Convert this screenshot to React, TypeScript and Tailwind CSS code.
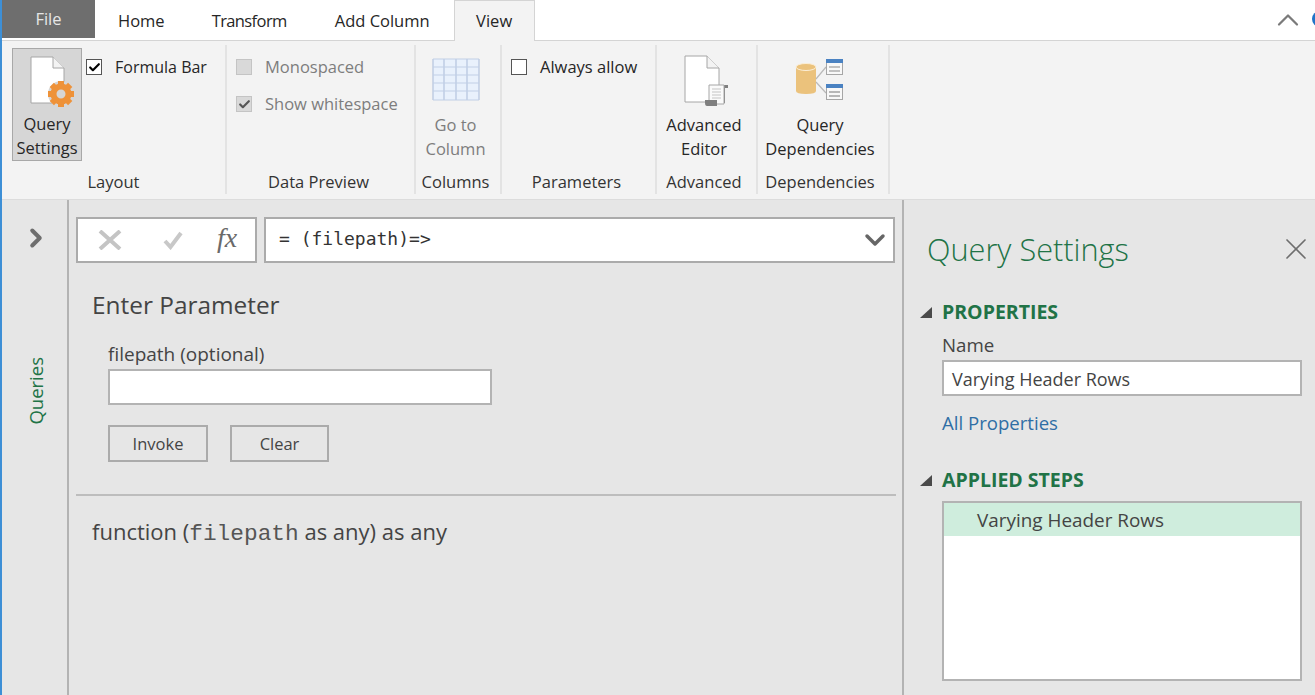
import { ReactNode } from 'react';
import { Check, ChevronDown, ChevronRight, ChevronUp, X } from 'lucide-react';

function Tab({ label, className }: { label: string; className: string }) {
  return <div className={`flex items-center pt-[2px] text-[#262626] ${className}`}>{label}</div>;
}

function RibbonGroup({ label, width, children, labelPad }: { label: string; width: string; children: ReactNode; labelPad?: string }) {
  return (
    <div className={`flex flex-col h-[149px] border-r-2 border-[#e3e3e3] shrink-0 ${width}`}>
      <div className="h-[124px] flex items-start">{children}</div>
      <div className={`text-center text-[16.5px] leading-[24px] mt-[3px] text-[#333] ${labelPad ?? 'pr-[4px]'}`}>{label}</div>
    </div>
  );
}

function CheckRow({
  label,
  checked,
  disabled,
  className,
  labelClass,
}: {
  label: string;
  checked?: boolean;
  disabled?: boolean;
  className?: string;
  labelClass?: string;
}) {
  return (
    <div className={`flex items-center h-[24px] ${className ?? ''}`}>
      <div
        className={`w-[16px] h-[16px] border flex items-center justify-center shrink-0 ${
          disabled ? 'bg-[#d9d9d9] border-[#c4c4c4]' : 'bg-white border-[#555]'
        }`}
      >
        {checked && <Check size={13} strokeWidth={4} className={disabled ? 'text-[#555]' : 'text-black'} />}
      </div>
      <span className={`ml-[13px] whitespace-nowrap ${labelClass ?? 'text-[16.5px]'} ${disabled ? 'text-[#7d7d7d]' : 'text-[#262626]'}`}>{label}</span>
    </div>
  );
}

function BigLabel({ lines, muted }: { lines: string[]; muted?: boolean }) {
  return (
    <div className={`text-center text-[16.5px] leading-[24px] whitespace-nowrap ${muted ? 'text-[#7d7d7d]' : 'text-[#262626]'}`}>
      {lines.map((l) => (
        <div key={l}>{l}</div>
      ))}
    </div>
  );
}

function QuerySettingsIcon() {
  const teeth = [0, 45, 90, 135, 180, 225, 270, 315];
  return (
    <svg width="46" height="54" viewBox="0 0 46 54">
      <path d="M1 1H23L34 12V47H1Z" fill="#fff" stroke="#a6a6a6" />
      <path d="M23 1V12H34" fill="#f3f3f3" stroke="#a6a6a6" />
      <circle cx="31" cy="38" r="13" fill="#d6d6d6" />
      {teeth.map((t) => (
        <rect key={t} x="28" y="25" width="6" height="6" fill="#ee9239" transform={`rotate(${t} 31 38)`} />
      ))}
      <circle cx="31" cy="38" r="7.5" fill="none" stroke="#ee9239" strokeWidth="6" />
    </svg>
  );
}

function GridIcon() {
  const xs = [1, 12, 24, 35, 47];
  const ys = [1, 9, 17, 25, 33, 42];
  return (
    <svg width="48" height="43" viewBox="0 0 48 43">
      <rect x="1" y="1" width="46" height="41" fill="#e9f1fc" />
      {xs.map((x) => (
        <line key={x} x1={x} y1="1" x2={x} y2="42" stroke="#b4c4de" strokeWidth="1.2" />
      ))}
      {ys.map((y) => (
        <line key={y} x1="1" y1={y} x2="47" y2={y} stroke="#c1cfe5" strokeWidth="1.2" />
      ))}
    </svg>
  );
}

function EditorIcon() {
  return (
    <svg width="46" height="52" viewBox="0 0 46 52">
      <path d="M1 1H23L35 13V47H1Z" fill="#fff" stroke="#a6a6a6" />
      <path d="M23 1V13H35" fill="#f3f3f3" stroke="#a6a6a6" />
      <path d="M28 30H44V33H41V48H28Z" fill="#7f7f7f" />
      <path d="M25 30H40V49H25Z" fill="#fafafa" stroke="#a6a6a6" />
      <path d="M28 34H37M28 37H37M28 40H37M28 43H37" stroke="#c4c4c4" />
      <path d="M21 45H33V51H23Q21 51 21 48Z" fill="#7f7f7f" />
    </svg>
  );
}

function DependenciesIcon() {
  return (
    <svg width="50" height="46" viewBox="0 0 50 46">
      <path d="M1 9V33Q1 36 11 36Q21 36 21 33V9Z" fill="#ebc27c" />
      <ellipse cx="11" cy="9" rx="10" ry="3.5" fill="#ebc27c" stroke="#fbeed7" />
      <path d="M21 21L31 9M21 24L31 35" stroke="#b9b9b9" strokeWidth="1.2" fill="none" />
      <rect x="31.5" y="1.5" width="16" height="15" fill="#f8f8f8" stroke="#a6a6a6" />
      <rect x="31" y="1" width="17" height="4" fill="#4a82c2" />
      <path d="M34 9H45M34 13H45" stroke="#8a8a8a" />
      <rect x="31.5" y="26.5" width="16" height="15" fill="#f8f8f8" stroke="#a6a6a6" />
      <rect x="31" y="26" width="17" height="4" fill="#4a82c2" />
      <path d="M34 34H45M34 38H45" stroke="#777" />
    </svg>
  );
}

function SectionHeading({ label }: { label: string }) {
  return (
    <div className="flex items-center h-[24px]">
      <svg width="12" height="11" viewBox="0 0 12 11" className="shrink-0">
        <path d="M12 0V11H0Z" fill="#4a4a4a" />
      </svg>
      <span className="ml-[10px] text-[19.5px] font-bold text-[#217346]">{label}</span>
    </div>
  );
}

export default function App() {
  return (
    <div className="w-[1315px] h-[695px] overflow-hidden flex flex-col border-l-2 border-[#3d8fd6] bg-[#e6e6e6] font-['Open_Sans','Noto_Sans',sans-serif] text-[16.5px]">
      {/* tabs */}
      <div className="h-[41px] bg-white flex shrink-0 border-b border-[#d4d4d4]">
        <div className="w-[93px] h-[38px] bg-[#6e6e6e] text-[#e6e6e6] flex items-center justify-center">File</div>
        <Tab label="Home" className="ml-[23px]" />
        <Tab label="Transform" className="ml-[47px] tracking-[-0.6px]" />
        <Tab label="Add Column" className="ml-[48px]" />
        <div className="ml-[24px] w-[81px] h-[41px] bg-[#f3f3f3] border border-b-0 border-[#d4d4d4] flex items-center justify-center text-[#262626]">
          View
        </div>
        <div className="ml-auto flex items-center">
          <ChevronUp size={36} strokeWidth={1.5} className="text-[#7a7a7a]" />
          <div className="ml-[6px] w-[16px] h-[16px] rounded-full bg-[#1f74c8] -mr-[13px] mb-[2px]" />
        </div>
      </div>

      {/* ribbon */}
      <div className="h-[159px] bg-[#f3f3f3] flex shrink-0 pt-[4px] border-b border-[#dcdcdc]">
        <RibbonGroup label="Layout" width="w-[225px]" labelPad="pr-[0px]">
          <div className="ml-[10px] mt-[3px] w-[70px] h-[113px] bg-[#d6d6d6] border border-[#a8a8a8] flex flex-col items-center pt-[7px]">
            <div className="h-[60px] ml-[11px]">
              <QuerySettingsIcon />
            </div>
            <BigLabel lines={['Query', 'Settings']} />
          </div>
          <CheckRow label="Formula Bar" checked className="ml-[4px] mt-[10px]" labelClass="text-[16px]" />
        </RibbonGroup>
        <RibbonGroup label="Data Preview" width="w-[189px]">
          <div className="ml-[9px] mt-[10px] flex flex-col gap-[13px]">
            <CheckRow label="Monospaced" disabled />
            <CheckRow label="Show whitespace" checked disabled />
          </div>
        </RibbonGroup>
        <RibbonGroup label="Columns" width="w-[86px]" labelPad="pr-[5px]">
          <div className="w-full flex flex-col items-center mt-[13px] pr-[5px]">
            <div className="h-[55px]">
              <GridIcon />
            </div>
            <BigLabel lines={['Go to', 'Column']} muted />
          </div>
        </RibbonGroup>
        <RibbonGroup label="Parameters" width="w-[155px]" labelPad="pr-[4px]">
          <CheckRow label="Always allow" className="ml-[9px] mt-[10px]" />
        </RibbonGroup>
        <RibbonGroup label="Advanced" width="w-[101px]" labelPad="pr-[5px]">
          <div className="w-full flex flex-col items-center mt-[10px] pr-[5px]">
            <div className="h-[58px] ml-[6px]">
              <EditorIcon />
            </div>
            <BigLabel lines={['Advanced', 'Editor']} />
          </div>
        </RibbonGroup>
        <RibbonGroup label="Dependencies" width="w-[132px]" labelPad="pr-[6px]">
          <div className="w-full flex flex-col items-center mt-[13px] pr-[6px]">
            <div className="h-[55px]">
              <DependenciesIcon />
            </div>
            <BigLabel lines={['Query', 'Dependencies']} />
          </div>
        </RibbonGroup>
      </div>

      {/* body */}
      <div className="flex flex-1 min-h-0">
        <div className="w-[67px] shrink-0 border-r-2 border-[#b3b3b3] flex flex-col items-center pl-[3px] pt-[23px]">
          <ChevronRight size={30} strokeWidth={3.2} className="text-[#6e6e6e]" />
          <div className="mt-[104px] [writing-mode:vertical-rl] rotate-180 text-[#217346] text-[18.5px] leading-none">Queries</div>
        </div>

        <div className="w-[835px] shrink-0 border-r-2 border-[#b3b3b3] flex flex-col pt-[17px]">
          <div className="flex px-[7px] gap-[7px] h-[46px]">
            <div className="w-[181px] bg-white border-2 border-[#ababab] flex items-center shrink-0">
              <svg width="24" height="20" viewBox="0 0 24 20" className="ml-[20px] shrink-0">
                <path d="M2 1L22 19M22 1L2 19" stroke="#c4c4c4" strokeWidth="4" fill="none" />
              </svg>
              <svg width="20" height="19" viewBox="0 0 20 19" className="ml-[41px] shrink-0">
                <path d="M2 10L7.5 16L18 2" stroke="#c8c8c8" strokeWidth="4" fill="none" />
              </svg>
              <span className="ml-[34px] font-['Liberation_Serif',serif] italic text-[28px] leading-none mb-[4px] text-[#6a6a6a]">fx</span>
            </div>
            <div className="flex-1 bg-white border-2 border-[#ababab] flex items-center justify-between pl-[13px] pr-[2px]">
              <span className="font-['DejaVu_Sans_Mono',monospace] text-[18px] mb-[3px] text-[#333]">= (filepath)=&gt;</span>
              <ChevronDown size={32} strokeWidth={2.6} className="text-[#666]" />
            </div>
          </div>

          <div className="pl-[23px] mt-[24px] text-[24.4px] leading-[36px] text-[#444]">Enter Parameter</div>
          <div className="pl-[39px] mt-[18px] text-[19px] leading-[26px] text-[#444]">filepath (optional)</div>
          <div className="ml-[39px] mt-[2px] w-[384px] h-[36px] bg-white border-2 border-[#b3b3b3]" />
          <div className="ml-[39px] mt-[20px] flex gap-[22px]">
            <div className="w-[100px] h-[37px] pt-[2px] border-2 border-[#ababab] flex items-center justify-center text-[#444] text-[16.5px]">Invoke</div>
            <div className="w-[99px] h-[37px] pt-[2px] border-2 border-[#ababab] flex items-center justify-center text-[#444] text-[16.5px]">Clear</div>
          </div>
          <div className="ml-[7px] mt-[32px] w-[820px] border-t-2 border-[#bdbdbd]" />
          <div className="pl-[23px] mt-[18px] text-[22px] leading-[34px] text-[#444]">
            function (<span className="font-['Liberation_Mono',monospace] text-[22.8px] text-[#555]">filepath</span> as any) as any
          </div>
        </div>

        <div className="flex-1 pt-[27px] pl-[16px] pr-[13px] min-w-0">
          <div className="flex items-center justify-between h-[44px]">
            <span className="ml-[7px] text-[30.7px] font-light text-[#217346]">Query Settings</span>
            <X size={36} strokeWidth={1.1} className="text-[#6e6e6e] -mr-[12px]" />
          </div>
          <div className="mt-[29px]">
            <SectionHeading label="PROPERTIES" />
          </div>
          <div className="ml-[22px]">
            <div className="mt-[9px] leading-[24px] text-[18.7px] text-[#444]">Name</div>
            <div className="mt-[3px] h-[36px] pt-[2px] bg-white border-2 border-[#b3b3b3] flex items-center pl-[8px] text-[18px] text-[#444]">
              Varying Header Rows
            </div>
            <div className="mt-[14px] leading-[26px] text-[18.6px] text-[#2f6ea5]">All Properties</div>
          </div>
          <div className="mt-[32px]">
            <SectionHeading label="APPLIED STEPS" />
          </div>
          <div className="ml-[22px] mt-[9px] h-[180px] bg-white border-2 border-[#b3b3b3]">
            <div className="h-[33px] pt-[1px] bg-[#cfeddd] flex items-center pl-[33px] text-[18.9px] text-[#444]">Varying Header Rows</div>
          </div>
        </div>
      </div>
    </div>
  );
}
